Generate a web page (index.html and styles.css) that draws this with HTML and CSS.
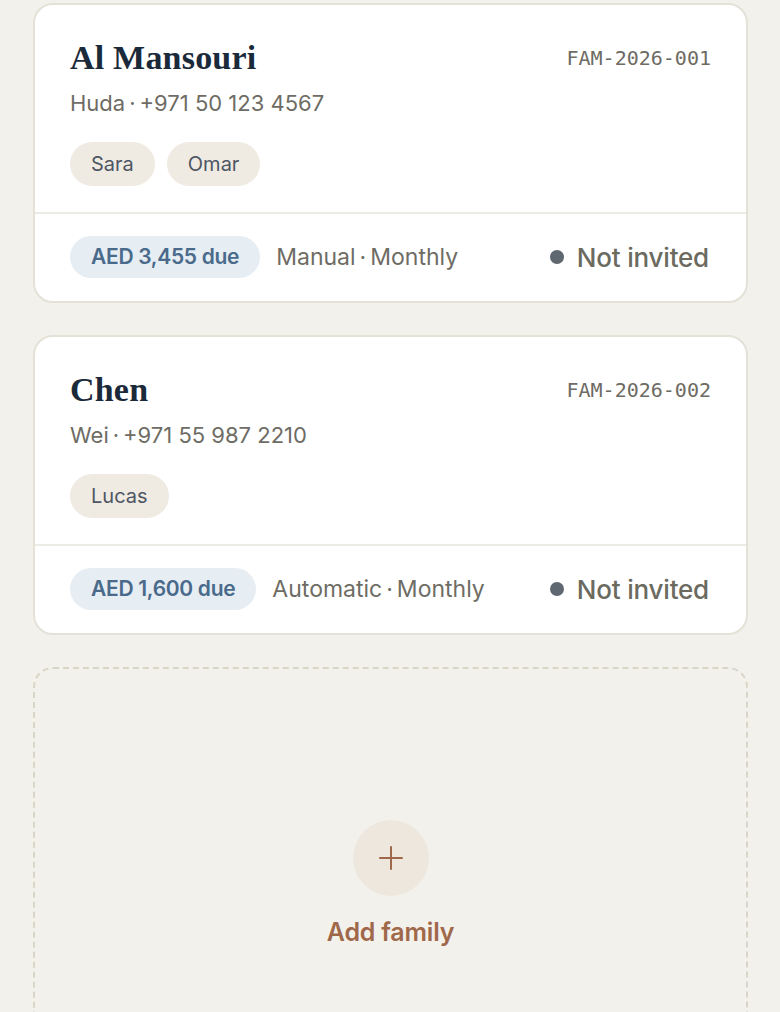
FILE: index.html
```html
<!DOCTYPE html>
<html lang="en">
<head>
<meta charset="UTF-8">
<title>Families</title>
<link rel="stylesheet" href="styles.css">
</head>
<body>
<div class="lista">

  <div class="card">
    <div class="card-topo">
      <div class="linha-titulo">
        <h2 class="nome">Al Mansouri</h2>
        <span class="codigo">FAM-2026-001</span>
      </div>
      <p class="contato">Huda<span class="ponto">·</span>+971 50 123 4567</p>
      <div class="filhos">
        <span class="chip">Sara</span>
        <span class="chip">Omar</span>
      </div>
    </div>
    <div class="card-base">
      <span class="devido">AED 3,455 due</span>
      <span class="plano">Manual<span class="ponto">·</span>Monthly</span>
      <span class="status"><i class="bolinha"></i>Not invited</span>
    </div>
  </div>

  <div class="card">
    <div class="card-topo">
      <div class="linha-titulo">
        <h2 class="nome">Chen</h2>
        <span class="codigo">FAM-2026-002</span>
      </div>
      <p class="contato">Wei<span class="ponto">·</span>+971 55 987 2210</p>
      <div class="filhos">
        <span class="chip">Lucas</span>
      </div>
    </div>
    <div class="card-base">
      <span class="devido">AED 1,600 due</span>
      <span class="plano">Automatic<span class="ponto">·</span>Monthly</span>
      <span class="status"><i class="bolinha"></i>Not invited</span>
    </div>
  </div>

  <div class="card-novo">
    <div class="mais">
      <svg width="26" height="26" viewBox="0 0 26 26" fill="none" stroke="#a0684a" stroke-width="2" stroke-linecap="round"><path d="M13 2v22M2 13h22"/></svg>
    </div>
    <span class="novo-texto">Add family</span>
  </div>

</div>
</body>
</html>
```

FILE: styles.css
```css
body { margin: 0; background: #f3f1ec; font-family: Inter, "Noto Sans", sans-serif; }
.lista { display: flex; flex-direction: column; gap: 32px; padding: 3px 32px 0 33px; }
.card { background: #fff; border: 2px solid #e4e2d7; border-radius: 20px; overflow: hidden; }
.card-topo { padding: 32px 35px 26px 35px; border-bottom: 2px solid #ecebe4; }
.linha-titulo { display: flex; justify-content: space-between; align-items: flex-start; }
.nome { margin: 0; font-family: "Liberation Serif", "DejaVu Serif", serif; font-weight: bold; font-size: 34px; line-height: 42px; color: #1b2a3a; letter-spacing: 0.2px; }
.codigo { font-family: "DejaVu Sans Mono", "Liberation Mono", monospace; font-size: 20px; color: #6d6b63; margin-top: 9px; }
.contato { margin: 10px 0 0; font-size: 22px; line-height: 28px; color: #6e6c64; }
.ponto { margin: 0 4px; }
.filhos { display: flex; gap: 12px; margin-top: 25px; }
.chip { background: #efebe3; color: #4e5663; font-size: 20px; line-height: 44px; height: 44px; padding: 0 21px; border-radius: 22px; }
.card-base { display: flex; align-items: center; padding: 22px 37px 23px 35px; }
.devido { background: #e6edf3; color: #4a6a8b; font-weight: 600; font-size: 21px; line-height: 42px; padding: 0 21px; border-radius: 21px; letter-spacing: -0.3px; }
.plano { margin-left: 16px; font-size: 23px; color: #6e6c64; }
.status { margin-left: auto; display: flex; align-items: center; font-size: 26px; font-weight: 500; color: #6b6a5f; letter-spacing: -0.2px; }
.bolinha { width: 14px; height: 14px; border-radius: 50%; background: #5f6770; margin-right: 13px; }
.card-novo { height: 380px; border: 2px dashed #dad6c7; border-radius: 20px; display: flex; flex-direction: column; align-items: center; padding-top: 151px; box-sizing: border-box; }
.mais { width: 76px; height: 76px; border-radius: 50%; background: #ede7de; display: flex; align-items: center; justify-content: center; }
.novo-texto { margin-top: 21px; font-size: 25px; font-weight: 600; color: #a0684a; letter-spacing: -0.2px; }
```
